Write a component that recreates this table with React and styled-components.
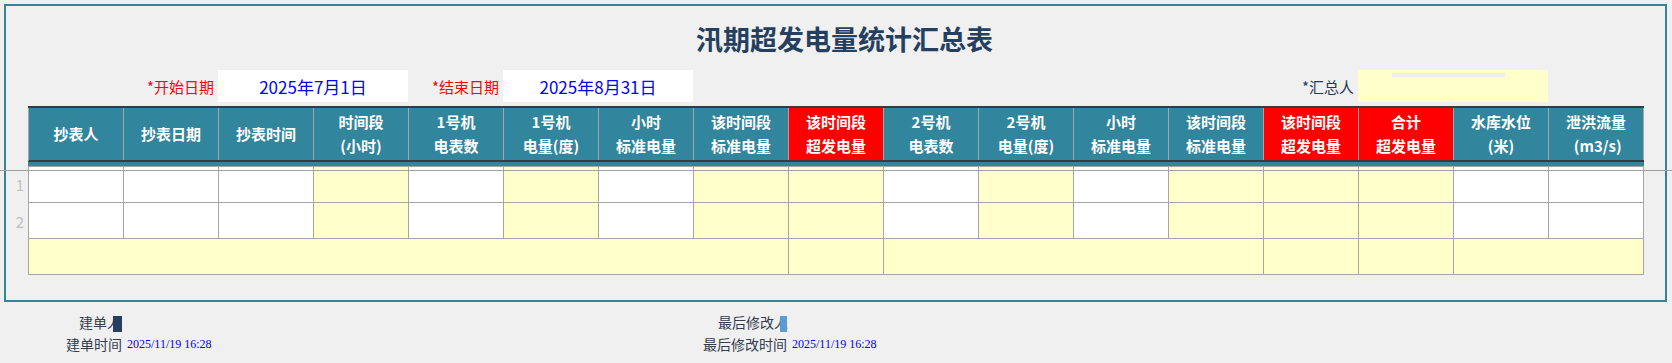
import React from 'react';
import styled, { createGlobalStyle } from 'styled-components';

const GlobalStyle = createGlobalStyle`
    html, body {
        margin: 0;
        padding: 0;
        background: #f0f0f0;
        font-family: "Microsoft YaHei", "Noto Sans CJK SC", sans-serif;
    }
`;

const TEAL = '#31859c';
const GRID = '#a6a6a6';
const YELLOW = '#ffffcc';
const COL = 95;

const columns = [
    { lines: ['抄表人'] },
    { lines: ['抄表日期'] },
    { lines: ['抄表时间'] },
    { lines: ['时间段', '(小时)'], fill: 'y' },
    { lines: ['1号机', '电表数'] },
    { lines: ['1号机', '电量(度)'], fill: 'y' },
    { lines: ['小时', '标准电量'] },
    { lines: ['该时间段', '标准电量'], fill: 'y' },
    { lines: ['该时间段', '超发电量'], fill: 'y', red: true },
    { lines: ['2号机', '电表数'] },
    { lines: ['2号机', '电量(度)'], fill: 'y' },
    { lines: ['小时', '标准电量'] },
    { lines: ['该时间段', '标准电量'], fill: 'y' },
    { lines: ['该时间段', '超发电量'], fill: 'y', red: true },
    { lines: ['合计', '超发电量'], fill: 'y', red: true },
    { lines: ['水库水位', '(米)'] },
    { lines: ['泄洪流量', '\u00a0(m3/s)'] },
];

const totalSpans = [8, 1, 4, 1, 1, 2];

const Page = styled.div`
    position: relative;
    width: 1672px;
    min-height: 363px;
`;

const FreezeLine = styled.div`
    position: absolute;
    top: 166px;
    left: 0;
    right: 0;
    height: 1px;
    background: #a0a0a0;
    z-index: 2;
`;

const Frame = styled.div`
    box-sizing: border-box;
    width: 1663px;
    margin: 4px 0 0 4px;
    border: 2px solid ${TEAL};
    padding: 15px 0 25px 0;
`;

const Title = styled.h1`
    box-sizing: border-box;
    width: 1615px;
    margin: 0 0 13px 22px;
    padding-left: 18px;
    text-align: center;
    font-size: 27px;
    line-height: 36px;
    font-weight: bold;
    color: #243f60;
`;

const FieldRow = styled.div`
    display: grid;
    grid-template-columns: repeat(17, ${COL}px);
    height: 32px;
    margin: 0 0 4px 22px;
`;

const FieldLabel = styled.div`
    grid-column: ${(p) => p.$col};
    display: flex;
    align-items: center;
    justify-content: flex-end;
    padding-right: 4px;
    font-size: 15px;
    color: ${(p) => (p.$required ? '#ff0000' : '#1f3a60')};
    white-space: nowrap;
`;

const FieldBox = styled.div`
    grid-column: ${(p) => p.$col} / span 2;
    display: flex;
    flex-direction: column;
    justify-content: center;
    align-items: center;
    background: ${(p) => (p.$yellow ? YELLOW : '#ffffff')};
    font-size: 17px;
    color: #0000ff;
`;

const BoxStrip = styled.span`
    align-self: flex-start;
    width: 113px;
    height: 4px;
    margin: 3px 0 0 34px;
    background: #eeeeee;
    flex: 0 0 auto;
`;

const BoxSpacer = styled.span`
    flex: 1;
`;

const Row = styled.div`
    display: flex;
`;

const RowNum = styled.div`
    box-sizing: border-box;
    flex: 0 0 22px;
    padding-right: 4px;
    display: flex;
    align-items: center;
    justify-content: flex-end;
    font-size: 15px;
    color: #c0c0c0;
`;

const HeaderBlock = styled.div`
    display: flex;
    flex-direction: column;
    border-top: 2px solid #3a3a3a;
`;

const HeaderCells = styled.div`
    display: flex;
    height: 52px;
    border-left: 1px solid ${GRID};
    border-bottom: 2px solid #3a3a3a;
`;

const HeaderCell = styled.div`
    box-sizing: border-box;
    flex: 0 0 ${COL}px;
    display: flex;
    flex-direction: column;
    align-items: center;
    justify-content: center;
    border-right: 1px solid ${GRID};
    background: ${(p) => (p.$red ? '#ff0000' : TEAL)};
    color: #ffffff;
    font-size: 15px;
    font-weight: bold;
    line-height: 24px;
    white-space: pre;
`;

const HeaderStrip = styled.div`
    height: 4px;
    background: ${TEAL};
`;

const Body = styled.div`
    display: flex;
    flex-direction: column;
`;

const BodyCells = styled.div`
    display: flex;
    border-left: 1px solid ${GRID};
    border-top: ${(p) => (p.$first ? `1px solid ${GRID}` : 'none')};
`;

const Cell = styled.div`
    box-sizing: border-box;
    flex: 0 0 ${(p) => p.$span * COL}px;
    height: 36px;
    border-right: 1px solid ${GRID};
    border-bottom: 1px solid ${GRID};
    background: ${(p) => (p.$fill === 'y' ? YELLOW : '#ffffff')};
`;

const Footer = styled.div`
    display: flex;
    padding-top: 9px;
`;

const FooterGroup = styled.div`
    flex: 0 0 ${(p) => p.$width}px;
    display: grid;
    grid-template-columns: ${(p) => p.$labelWidth}px auto;
    column-gap: 5px;
    line-height: 22px;
    align-items: center;
`;

const FooterLabel = styled.div`
    text-align: right;
    font-size: 14px;
    color: #333d4d;
    white-space: nowrap;
`;

const Caret = styled.span`
    display: inline-block;
    width: ${(p) => p.$w}px;
    height: 16px;
    margin-left: -8px;
    vertical-align: -4px;
    background: ${(p) => p.$color};
`;

const Stamp = styled.div`
    font-family: "Liberation Serif", "Times New Roman", serif;
    font-size: 12px;
    color: #0000ff;
`;

const App = () => {
    return (
        <Page>
            <GlobalStyle />
            <FreezeLine />
            <Frame>
                <Title>汛期超发电量统计汇总表</Title>
                <FieldRow>
                    <FieldLabel $col={2} $required>
                        *开始日期
                    </FieldLabel>
                    <FieldBox $col={3}>2025年7月1日</FieldBox>
                    <FieldLabel $col={5} $required>
                        *结束日期
                    </FieldLabel>
                    <FieldBox $col={6}>2025年8月31日</FieldBox>
                    <FieldLabel $col={14}>*汇总人</FieldLabel>
                    <FieldBox $col={15} $yellow>
                        <BoxStrip />
                        <BoxSpacer />
                    </FieldBox>
                </FieldRow>
                <Row>
                    <RowNum />
                    <HeaderBlock>
                        <HeaderCells>
                            {columns.map((c, i) => (
                                <HeaderCell key={i} $red={c.red}>
                                    {c.lines.map((l) => (
                                        <span key={l}>{l}</span>
                                    ))}
                                </HeaderCell>
                            ))}
                        </HeaderCells>
                        <HeaderStrip />
                    </HeaderBlock>
                </Row>
                <Body>
                    {[1, 2].map((n) => (
                        <Row key={n}>
                            <RowNum>{n}</RowNum>
                            <BodyCells $first={n === 1}>
                                {columns.map((c, i) => (
                                    <Cell key={i} $span={1} $fill={c.fill} />
                                ))}
                            </BodyCells>
                        </Row>
                    ))}
                    <Row>
                        <RowNum />
                        <BodyCells>
                            {totalSpans.map((s, i) => (
                                <Cell key={i} $span={s} $fill="y" />
                            ))}
                        </BodyCells>
                    </Row>
                </Body>
            </Frame>
            <Footer>
                <FooterGroup $width={600} $labelWidth={122}>
                    <FooterLabel>
                        建单人
                        <Caret $w={9} $color="#243f60" />
                    </FooterLabel>
                    <div />
                    <FooterLabel>建单时间</FooterLabel>
                    <Stamp>2025/11/19 16:28</Stamp>
                </FooterGroup>
                <FooterGroup $width={400} $labelWidth={187}>
                    <FooterLabel>
                        最后修改人
                        <Caret $w={7} $color="#5b9bd5" />
                    </FooterLabel>
                    <div />
                    <FooterLabel>最后修改时间</FooterLabel>
                    <Stamp>2025/11/19 16:28</Stamp>
                </FooterGroup>
            </Footer>
        </Page>
    );
};

export default App;
